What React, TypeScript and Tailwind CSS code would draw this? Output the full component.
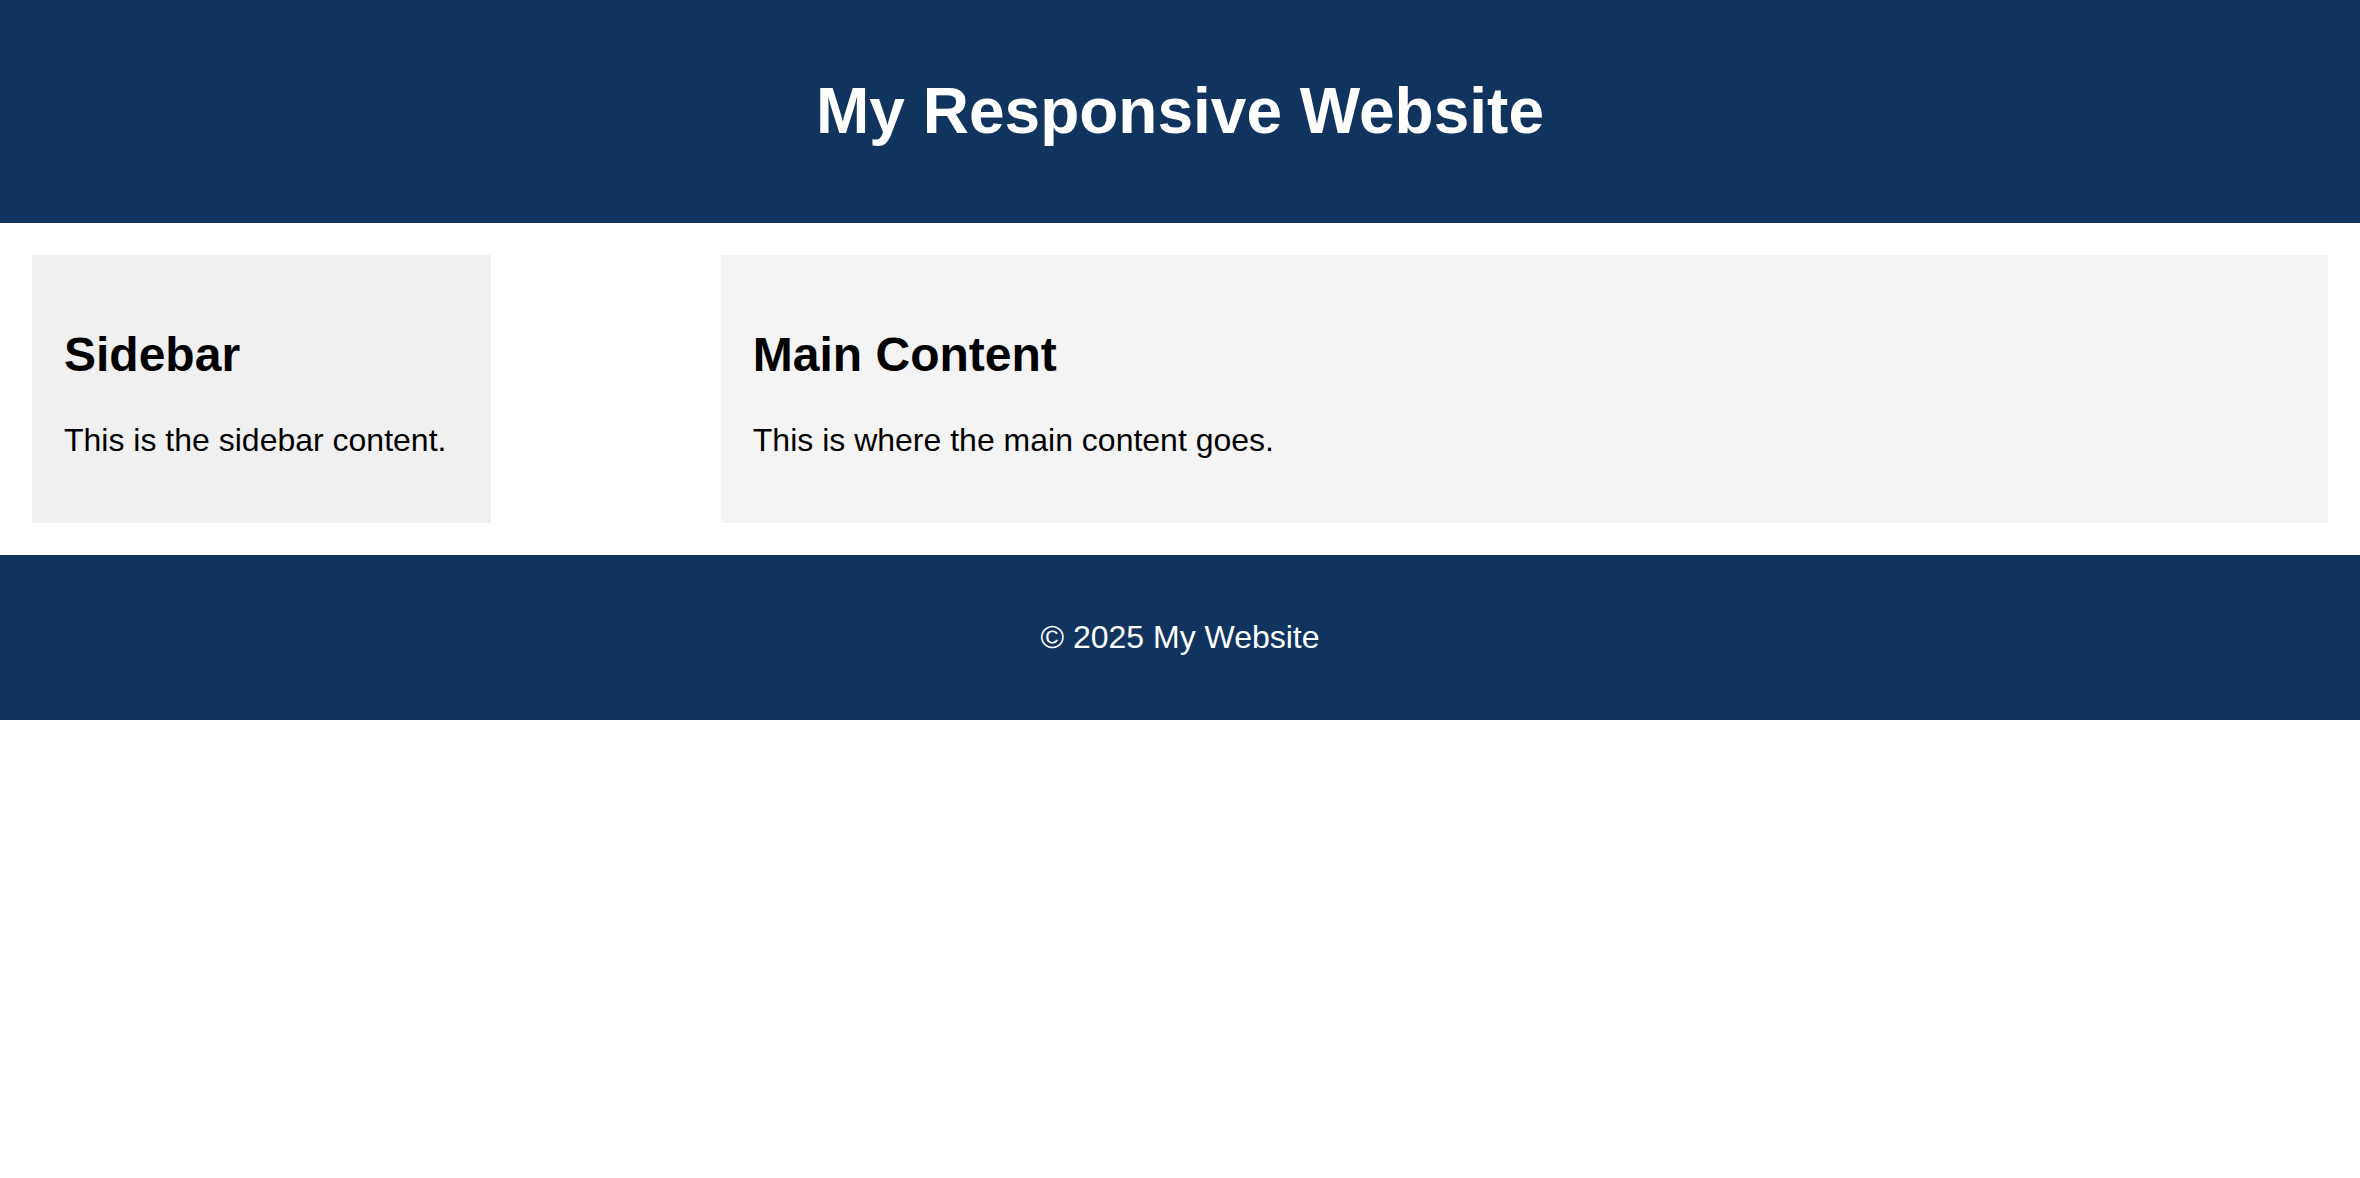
export default function App() {
  return (
    <div className="min-h-[1178px] bg-white font-['Liberation_Sans',Arial,sans-serif] text-black">
      <header className="bg-[#10345e] py-[32px] text-center text-white">
        <h1 className="my-[42.88px] text-[64px] font-bold leading-[73.6px]">My Responsive Website</h1>
      </header>
      <div className="flex justify-between p-[32px]">
        <aside className="w-[20%] bg-[#f0f0f0] p-[32px]">
          <h2 className="mt-[39.84px] mb-[39.84px] text-[48px] font-bold leading-[55.2px]">Sidebar</h2>
          <p className="mb-[32px] text-[32px] leading-[36.8px]">This is the sidebar content.</p>
        </aside>
        <main className="w-[70%] bg-[#f4f4f4] p-[32px]">
          <h2 className="mt-[39.84px] mb-[39.84px] text-[48px] font-bold leading-[55.2px]">Main Content</h2>
          <p className="mb-[32px] text-[32px] leading-[36.8px]">This is where the main content goes.</p>
        </main>
      </div>
      <footer className="bg-[#10345e] py-[32px] text-center text-white">
        <p className="my-[32px] text-[32px] leading-[36.8px]">© 2025 My Website</p>
      </footer>
    </div>
  );
}
